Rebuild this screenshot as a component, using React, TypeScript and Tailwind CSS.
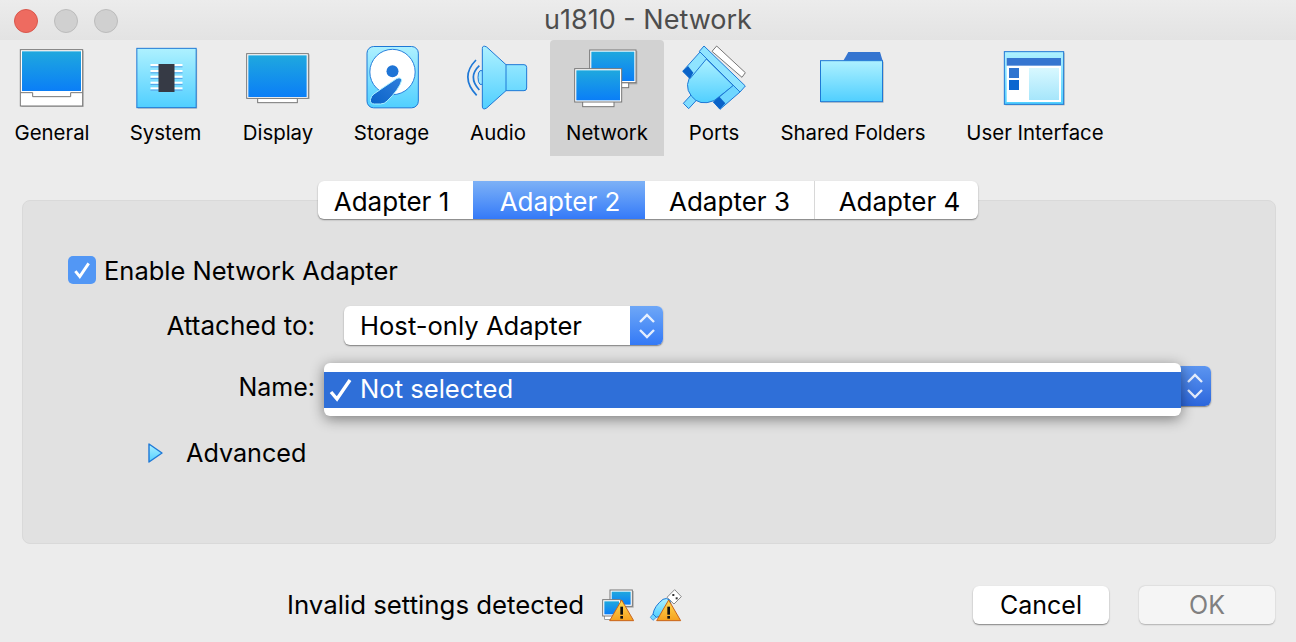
import type { ReactNode } from 'react'

const Gradients = () => (
  <svg className="absolute h-0 w-0">
    <defs>
      <linearGradient id="screen" x1="0" y1="0" x2="0" y2="1">
        <stop offset="0" stopColor="#1fa8de" />
        <stop offset="1" stopColor="#0a7ef7" />
      </linearGradient>
      <linearGradient id="light" x1="0" y1="0" x2="0" y2="1">
        <stop offset="0" stopColor="#aef1ff" />
        <stop offset="1" stopColor="#50cfff" />
      </linearGradient>
      <linearGradient id="pane" x1="0" y1="0" x2="0" y2="1">
        <stop offset="0" stopColor="#d8f8ff" />
        <stop offset="1" stopColor="#a6e6fb" />
      </linearGradient>
      <linearGradient id="arm" x1="1" y1="0" x2="0" y2="1">
        <stop offset="0" stopColor="#2f7fdc" />
        <stop offset="1" stopColor="#0a63c8" />
      </linearGradient>
      <linearGradient id="warn" x1="0" y1="0" x2="0" y2="1">
        <stop offset="0" stopColor="#ffdc55" />
        <stop offset="1" stopColor="#f6a01e" />
      </linearGradient>
    </defs>
  </svg>
)

const Icon = ({ vx, vy, children }: { vx: number; vy: number; children: ReactNode }) => (
  <svg
    className="h-16 w-16 overflow-visible"
    viewBox={`${vx} ${vy} 192 192`}
  >
    {children}
  </svg>
)

const GeneralIcon = () => (
  <Icon vx={60} vy={138}>
    <rect x="64" y="152" width="187" height="169" fill="#b5b5b5" />
    <rect x="61" y="149" width="187" height="169" fill="#fff" stroke="#777" strokeWidth="3" />
    <rect x="66" y="154" width="177" height="119" fill="url(#screen)" />
    <path d="M62 278H98V290H212V278H247" fill="none" stroke="#777" strokeWidth="3" />
  </Icon>
)

const SystemIcon = () => (
  <Icon vx={400.5} vy={138}>
    <rect x="412" y="148" width="178" height="178" fill="#b5b5b5" />
    <rect x="409" y="145" width="178" height="178" fill="url(#light)" stroke="#1e78d6" strokeWidth="3" />
    {[192, 210, 227, 245, 262].map((y) => (
      <g key={y}>
        <rect x="450" y={y} width="96" height="6" fill="#fff" />
        <rect x="450" y={y + 7} width="96" height="3" fill="#5aa6ea" />
      </g>
    ))}
    <rect x="474" y="192" width="48" height="84" fill="#363a45" />
  </Icon>
)

const DisplayIcon = () => (
  <Icon vx={738} vy={138}>
    <rect x="742" y="163" width="187" height="134" fill="#b5b5b5" />
    <rect x="773" y="295" width="119" height="13" fill="#fff" stroke="#777" strokeWidth="3" />
    <rect x="740" y="161" width="185" height="134" fill="#fff" stroke="#777" strokeWidth="3" />
    <rect x="745" y="166" width="175" height="125" fill="url(#screen)" />
  </Icon>
)

const StorageIcon = () => (
  <Icon vx={1078.5} vy={138}>
    <rect x="1099.5" y="139.5" width="154" height="184" rx="20" fill="url(#light)" stroke="#1e78d6" strokeWidth="3" />
    <circle cx="1176" cy="216" r="68" fill="#fff" stroke="#2a80dc" strokeWidth="3" />
    <circle cx="1176" cy="214" r="18" fill="#1e74d6" />
    <path
      d="M1188 236Q1200 230 1204 240Q1196 268 1160 303Q1152 312 1140 312H1122Q1108 312 1110 298Q1112 288 1120 282Z"
      fill="url(#arm)"
      stroke="#acefff"
      strokeWidth="3"
    />
  </Icon>
)

const AudioIcon = () => (
  <Icon vx={18} vy={12}>
    <path d="M67 86H60Q54 90 54 106Q54 122 60 127H67" fill="#9fe6ff" stroke="#1e78d6" strokeWidth="3" />
    <path
      d="M67 20Q67 8 80 15L138 68H192Q200 68 200 76V138Q200 146 192 146H138L80 198Q67 206 67 192Z"
      fill="url(#light)"
      stroke="#1e78d6"
      strokeWidth="3"
      strokeLinejoin="round"
    />
    <path d="M138 68V146" stroke="#1e78d6" strokeWidth="3" />
    <path d="M48 54Q-2 105 50 160" fill="none" stroke="#1e78d6" strokeWidth="5" />
    <path d="M58 71Q22 105 58 144" fill="none" stroke="#1e78d6" strokeWidth="5" />
  </Icon>
)

const NetworkIcon = () => (
  <Icon vx={405} vy={138}>
    <rect x="452" y="153" width="140" height="100" fill="#a8a8a8" />
    <rect x="518" y="248" width="48" height="15" fill="#fff" stroke="#777" strokeWidth="3" />
    <rect x="449" y="150" width="139" height="98" fill="#fff" stroke="#777" strokeWidth="3" />
    <rect x="454" y="155" width="129" height="88" fill="url(#screen)" />
    <rect x="428" y="304" width="94" height="16" fill="#fff" stroke="#777" strokeWidth="3" />
    <rect x="404" y="206" width="141" height="100" fill="#fff" stroke="#777" strokeWidth="3" />
    <rect x="409" y="211" width="131" height="90" fill="url(#screen)" />
  </Icon>
)

const PortsIcon = () => (
  <Icon vx={18} vy={18}>
    <polygon points="122,18 208,98 198,112 108,34" fill="#fff" stroke="#777" strokeWidth="3" strokeLinejoin="round" />
    <polygon points="46,164 22,190 38,206 62,180" fill="#7fdcff" stroke="#1e78d6" strokeWidth="3" strokeLinejoin="round" />
    <path
      d="M90 56L172 137L114 182Q70 200 46 168Q20 135 52 96Z"
      fill="url(#light)"
      stroke="#1e78d6"
      strokeWidth="3"
      strokeLinejoin="round"
    />
    <polygon points="72,36 92,56 42,116 20,94" fill="#8fe4ff" stroke="#1e78d6" strokeWidth="3" strokeLinejoin="round" />
    <polygon points="172,136 192,156 132,208 112,186" fill="#6fd6ff" stroke="#1e78d6" strokeWidth="3" strokeLinejoin="round" />
    <polygon points="36,78 52,98 42,116 20,94" fill="#0a62c8" />
    <polygon points="130,170 148,190 132,208 112,186" fill="#0a62c8" />
    <polygon points="84,18 208,138 192,156 70,34" fill="#8fe4ff" stroke="#1e78d6" strokeWidth="3" strokeLinejoin="round" />
  </Icon>
)

const FolderIcon = () => (
  <Icon vx={153} vy={48}>
    <rect x="153" y="95" width="188" height="123" fill="#b5b5b5" />
    <path d="M220 92L235 66H330L338 92Z" fill="#3575d0" />
    <rect x="151.5" y="92" width="186" height="123" fill="url(#light)" stroke="#1e78d6" strokeWidth="3" />
  </Icon>
)

const InterfaceIcon = () => (
  <Icon vx={699} vy={48}>
    <rect x="706" y="68" width="178" height="158" fill="#b5b5b5" />
    <rect x="703" y="65" width="178" height="158" fill="url(#light)" stroke="#1e78d6" strokeWidth="3" />
    <rect x="710" y="84" width="163" height="132" fill="#fff" />
    <rect x="710" y="84" width="163" height="23" fill="#3575d0" />
    <rect x="717" y="114" width="30" height="30" fill="#2f74d0" />
    <rect x="717" y="150" width="30" height="30" fill="#0a66d0" />
    <rect x="777" y="114" width="90" height="96" fill="url(#pane)" />
  </Icon>
)

const items = [
  { label: 'General', width: 'w-[104px]', icon: <GeneralIcon /> },
  { label: 'System', width: 'w-[123px]', icon: <SystemIcon /> },
  { label: 'Display', width: 'w-[102px]', icon: <DisplayIcon /> },
  { label: 'Storage', width: 'w-[125px]', icon: <StorageIcon /> },
  { label: 'Audio', width: 'w-[88px] mr-2', icon: <AudioIcon /> },
  { label: 'Network', width: 'w-[114px] bg-[#d2d2d2] rounded-t-[4px]', icon: <NetworkIcon /> },
  { label: 'Ports', width: 'w-[100px]', icon: <PortsIcon /> },
  { label: 'Shared Folders', width: 'w-[178px]', icon: <FolderIcon /> },
  { label: 'User Interface', width: 'w-[186px]', icon: <InterfaceIcon /> },
]

const tabs = [
  { label: 'Adapter 1', width: 'w-[155px] pr-2' },
  { label: 'Adapter 2', width: 'w-[172px] pl-0.5 bg-gradient-to-b from-[#7db1f6] to-[#3479f8] text-white' },
  { label: 'Adapter 3', width: 'w-[170px] border-r border-[#d8d8d8]' },
  { label: 'Adapter 4', width: 'w-[163px] pl-1.5' },
]

const Stepper = ({ tone }: { tone: string }) => (
  <div className={`flex h-full w-[33px] items-center justify-center ${tone}`}>
    <svg className="h-[34px] w-[18px]" viewBox="0 0 18 34" fill="none" stroke="#fff" strokeOpacity="0.85" strokeWidth="2.4">
      <path d="M2 13L9 6L16 13" />
      <path d="M2 21L9 28L16 21" />
    </svg>
  </div>
)

const Warning = () => (
  <g>
    <polygon points="1025,86 1061,148 989,148" fill="url(#warn)" stroke="#c9641c" strokeWidth="3" strokeLinejoin="round" />
    <rect x="1021" y="106" width="8" height="24" fill="#111" />
    <rect x="1021" y="134" width="8" height="8" fill="#111" />
  </g>
)

export default function App() {
  return (
    <div className="h-[642px] w-[1296px] overflow-hidden bg-[#ececec] font-['Inter',sans-serif] text-black">
      <Gradients />
      {/* title bar */}
      <div className="grid h-10 grid-cols-[1fr_auto_1fr] items-center bg-gradient-to-b from-[#ececec] to-[#e3e3e3]">
        <div className="flex gap-4 pl-[14px]">
          <span className="h-6 w-6 rounded-full border border-[#d9574c] bg-[#ee6b60]" />
          <span className="h-6 w-6 rounded-full border border-[#bcbcbc] bg-[#d0d0d0]" />
          <span className="h-6 w-6 rounded-full border border-[#bcbcbc] bg-[#d0d0d0]" />
        </div>
        <div className="pb-0.5 text-[27px] text-[#4d4d4d]">u1810 - Network</div>
        <div />
      </div>

      {/* toolbar */}
      <div className="flex h-[116px]">
        {items.map((item) => (
          <div key={item.label} className={`flex h-full shrink-0 flex-col items-center pt-1.5 ${item.width}`}>
            {item.icon}
            <span className="mt-[11px] whitespace-nowrap text-[20.4px] leading-6">{item.label}</span>
          </div>
        ))}
      </div>

      {/* adapter tabs */}
      <div className="relative z-10 ml-[318px] mt-[25px] flex h-[38px] w-[660px] overflow-hidden rounded-[6px] bg-white shadow-[0_1px_1.5px_rgba(0,0,0,0.45)]">
        {tabs.map((tab) => (
          <div key={tab.label} className={`flex h-full items-center justify-center pt-0.5 text-[26px] ${tab.width}`}>
            {tab.label}
          </div>
        ))}
      </div>

      {/* settings panel */}
      <div className="ml-[22px] -mt-[19px] flex h-[344px] w-[1254px] flex-col rounded-[8px] border border-[#d9d9d9] bg-[#e1e1e1] pt-[55px] text-[25px]">
        <div className="flex h-7 items-center pl-[45px]">
          <span className="flex h-7 w-7 items-center justify-center rounded-[5px] bg-[#5297f5]">
            <svg className="h-5 w-5" viewBox="0 0 18 18" fill="none" stroke="#fff" strokeWidth="2.6">
              <path d="M3 10L7 15L15 3" />
            </svg>
          </span>
          <span className="ml-2 pt-0.5 text-[25.5px]">Enable Network Adapter</span>
        </div>

        <div className="mt-[22px] flex h-[39px] items-center">
          <span className="w-[292px] text-right text-[26px]">Attached to:</span>
          <div className="ml-[29px] flex h-full w-[319px] items-center justify-between overflow-hidden rounded-[6px] bg-white pl-4 shadow-[0_1px_1.5px_rgba(0,0,0,0.45)]">
            <span className="pt-0.5 text-[25.6px]">Host-only Adapter</span>
            <Stepper tone="bg-gradient-to-b from-[#6ea7f7] to-[#3479f6]" />
          </div>
        </div>

        <div className="mt-[21px] flex h-10 items-center">
          <span className="w-[292px] pt-1 text-right">Name:</span>
          <div className="relative ml-[29px] flex h-full w-[867px] justify-end overflow-visible rounded-[6px] bg-white shadow-[0_1px_1.5px_rgba(0,0,0,0.45)]">
            <div className="overflow-hidden rounded-r-[6px]">
              <Stepper tone="bg-gradient-to-b from-[#5c95f0] to-[#2c66dc]" />
            </div>
            {/* open popup menu */}
            <div className="absolute -left-5 -top-[3px] h-[53px] w-[857px] rounded-[6px] bg-white pt-[9px] shadow-[0_3px_14px_rgba(0,0,0,0.45)]">
              <div className="flex h-9 items-center bg-[#2f6fd8] text-white">
                <svg className="ml-[5px] h-6 w-6" viewBox="0 0 24 24" fill="none" stroke="#fff" strokeWidth="3.4">
                  <path d="M2 14L8 21L21 2" />
                </svg>
                <span className="ml-[7px] pb-0.5 text-[25.6px]">Not selected</span>
              </div>
            </div>
          </div>
        </div>

        <div className="mt-[34px] flex h-[26px] items-center pl-[125px]">
          <svg className="h-5 w-[15px]" viewBox="0 0 15 20">
            <polygon points="1,1 14,10 1,19" fill="url(#light)" stroke="#1e78d6" strokeWidth="1.4" strokeLinejoin="round" />
          </svg>
          <span className="ml-[23px] pt-0.5 text-[25.2px]">Advanced</span>
        </div>
      </div>

      {/* footer */}
      <div className="mt-[42px] flex h-[38px] items-center pl-[287px] text-[25px]">
        <span className="w-[313px] whitespace-nowrap text-[25.8px]">Invalid settings detected</span>
        <svg className="h-[34px] w-[34px]" viewBox="960 50 102 102">
          <rect x="993" y="59" width="68" height="50" fill="#aaa" />
          <rect x="990" y="56" width="67" height="49" fill="#fff" stroke="#777" strokeWidth="3" />
          <rect x="995" y="61" width="57" height="39" fill="url(#screen)" />
          <rect x="974" y="130" width="30" height="14" fill="#fff" stroke="#777" strokeWidth="2" />
          <rect x="968" y="85" width="54" height="49" fill="#fff" stroke="#777" strokeWidth="3" />
          <rect x="973" y="90" width="44" height="39" fill="url(#screen)" />
          <Warning />
        </svg>
        <svg className="ml-[15px] h-[34px] w-[34px]" viewBox="1108 50 102 102">
          <polygon points="1162,78 1185,55 1205,76 1183,98" fill="#fff" stroke="#888" strokeWidth="3" strokeLinejoin="round" />
          <rect x="1178" y="68" width="6" height="6" fill="#333" />
          <rect x="1188" y="78" width="6" height="6" fill="#333" />
          <polygon points="1120,128 1112,138 1120,147 1130,138" fill="#6fd6ff" stroke="#1e78d6" strokeWidth="2" />
          <path d="M1120 128Q1124 104 1150 84Q1160 78 1170 86Q1176 96 1170 106Q1150 136 1130 138Z" fill="url(#light)" stroke="#1e78d6" strokeWidth="3" />
          <g transform="translate(142 0)">
            <Warning />
          </g>
        </svg>
        <button className="ml-[290px] h-[38px] w-[136px] rounded-[6px] bg-white pt-px shadow-[0_1px_1.5px_rgba(0,0,0,0.45)]">Cancel</button>
        <button className="ml-[30px] h-[38px] w-[136px] rounded-[6px] bg-[#f5f5f5] pt-px text-[#808080] shadow-[0_0.5px_1.5px_rgba(0,0,0,0.25)]">OK</button>
      </div>
    </div>
  )
}
